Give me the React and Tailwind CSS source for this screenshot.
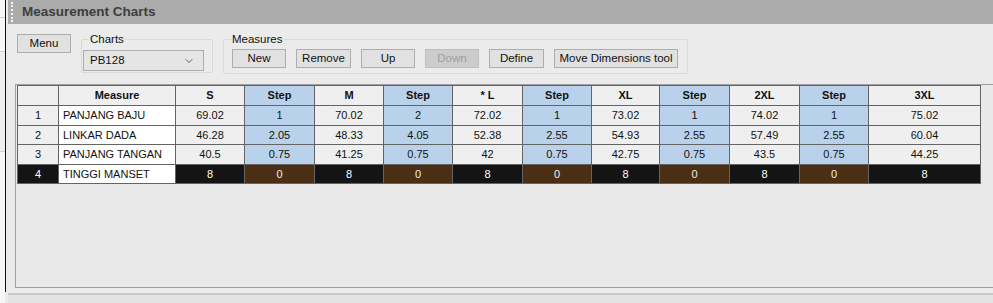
import React from 'react';
import { ChevronDown } from 'lucide-react';

const sizes = ['S', 'M', '* L', 'XL', '2XL', '3XL'];

const rows = [
    { no: 1, name: 'PANJANG BAJU', vals: ['69.02', '1', '70.02', '2', '72.02', '1', '73.02', '1', '74.02', '1', '75.02'] },
    { no: 2, name: 'LINKAR DADA', vals: ['46.28', '2.05', '48.33', '4.05', '52.38', '2.55', '54.93', '2.55', '57.49', '2.55', '60.04'] },
    { no: 3, name: 'PANJANG TANGAN', vals: ['40.5', '0.75', '41.25', '0.75', '42', '0.75', '42.75', '0.75', '43.5', '0.75', '44.25'] },
    { no: 4, name: 'TINGGI MANSET', vals: ['8', '0', '8', '0', '8', '0', '8', '0', '8', '0', '8'], selected: true },
];

// widths of the 11 value columns (size, step, size, step ...)
const colW = ['w-[69px]', 'w-[70px]', 'w-[69px]', 'w-[69px]', 'w-[70px]', 'w-[69px]', 'w-[68px]', 'w-[70px]', 'w-[70px]', 'w-[69px]', 'w-[112px]'];
const rowH = ['h-[20px]', 'h-[19px]', 'h-[20px]', 'h-[19px]'];

const Btn = ({ children, disabled, className = '' }) => (
    <button
        className={`h-[19px] border text-[11.5px] leading-none ${disabled
            ? 'bg-[#cccccc] border-[#bfbfbf] text-[#a0a0a0]'
            : 'bg-[#e1e1e1] border-[#adadad] text-[#111]'
            } ${className}`}
    >
        {children}
    </button>
);

const GroupBox = ({ label, className = '', children }) => (
    <div className={`relative border border-[#d9d9d9] rounded-[2px] ${className}`}>
        <span className="absolute -top-[8px] left-[7px] bg-[#ebebeb] px-[1px] text-[11.5px] leading-[14px] text-[#111]">
            {label}
        </span>
        {children}
    </div>
);

export default function App() {
    return (
        <div className="w-[993px] h-[303px] overflow-hidden flex bg-[#ebebeb] font-['Liberation_Sans',Arial,sans-serif]">

            {/* ── left edge of neighbour window ── */}
            <div className="w-[5px] shrink-0 bg-[#f7f7f7] flex flex-col">
                <div className="h-[18px] border-b border-[#d0d0d0]" />
                <div className="h-[34px] border-b border-[#d0d0d0]" />
                <div className="h-[100px] bg-[#eeeeee] border-b border-[#d0d0d0]" />
            </div>
            <div className="w-px shrink-0 h-[292px] bg-[#111]" />

            <div className="flex-1 min-w-0 flex flex-col pl-[2px]">
                {/* ── Title bar ── */}
                <div className="h-[24px] shrink-0 bg-[#ababab] flex items-center">
                    <div className="w-[2px] h-[20px] ml-[3px] border-l-2 border-dotted border-[#f5f5f5]" />
                    <span className="ml-[9px] text-[13.5px] font-bold text-[#3e3e3e]">Measurement Charts</span>
                </div>

                {/* ── Toolbar ── */}
                <div className="h-[60px] shrink-0 flex items-start pl-[9px]">
                    <Btn className="w-[54px] mt-[10px]">Menu</Btn>

                    <GroupBox label="Charts" className="ml-[10px] mt-[15px] w-[132px] h-[34px]">
                        <div className="absolute left-[1px] top-[10px] w-[121px] h-[21px] bg-[#e5e5e5] border border-[#acacac] flex items-center justify-between pl-[6px] pr-[8px]">
                            <span className="text-[11.5px] text-[#111]">PB128</span>
                            <ChevronDown className="w-[12px] h-[12px] text-[#333]" strokeWidth={1.5} />
                        </div>
                    </GroupBox>

                    <GroupBox label="Measures" className="ml-[10px] mt-[15px] w-[465px] h-[35px]">
                        <div className="flex items-center gap-[10px] pl-[8px] pt-[9px]">
                            <Btn className="w-[54px]">New</Btn>
                            <Btn className="w-[55px]">Remove</Btn>
                            <Btn className="w-[54px]">Up</Btn>
                            <Btn className="w-[54px]" disabled>Down</Btn>
                            <Btn className="w-[55px]">Define</Btn>
                            <Btn className="w-[124px]">Move Dimensions tool</Btn>
                        </div>
                    </GroupBox>
                </div>

                {/* ── Grid ── */}
                <div className="ml-[7px] h-[204px] shrink-0 border-t border-l border-b border-[#a0a0a0] bg-[#e9e9e9] pl-[1px]">
                    <table className="border-collapse text-[11px] leading-none text-[#111] table-fixed">
                        <thead>
                            <tr className="h-[20px]">
                                <th className="w-[41px] bg-[#efefef] border border-[#646464]" />
                                <th className="w-[117px] bg-[#efefef] border border-[#646464] font-bold">Measure</th>
                                {colW.map((w, i) => {
                                    const step = i % 2 === 1;
                                    return (
                                        <th
                                            key={i}
                                            className={`${w} border border-[#646464] font-bold ${step ? 'bg-[#b9d1ea]' : 'bg-[#efefef]'}`}
                                        >
                                            {step ? 'Step' : sizes[i / 2]}
                                        </th>
                                    );
                                })}
                            </tr>
                        </thead>
                        <tbody>
                            {rows.map((r, ri) => (
                                <tr key={r.no} className={rowH[ri]}>
                                    <td className={`text-center border ${r.selected ? 'bg-[#141414] text-white border-[#646464]' : 'bg-[#efefef] border-[#646464]'}`}>
                                        {r.no}
                                    </td>
                                    <td className="bg-white border border-[#646464] pl-[4px] text-left">{r.name}</td>
                                    {r.vals.map((v, i) => {
                                        const step = i % 2 === 1;
                                        let cls = step ? 'bg-[#b9d1ea]' : 'bg-[#efefef]';
                                        if (r.selected) cls = step ? 'bg-[#4a2f14] text-[#f0f0f0] border-l-[#e0e0e0]' : 'bg-[#141414] text-white border-l-[#e0e0e0]';
                                        return (
                                            <td key={i} className={`text-center border border-[#646464] ${cls}`}>
                                                {v}
                                            </td>
                                        );
                                    })}
                                </tr>
                            ))}
                        </tbody>
                    </table>
                </div>

                {/* ── Bottom strip ── */}
                <div className="h-[5px] shrink-0" />
                <div className="flex-1 border-t-2 border-[#c8c8c8] bg-[#e3e3e3]" />
            </div>
        </div>
    );
}
